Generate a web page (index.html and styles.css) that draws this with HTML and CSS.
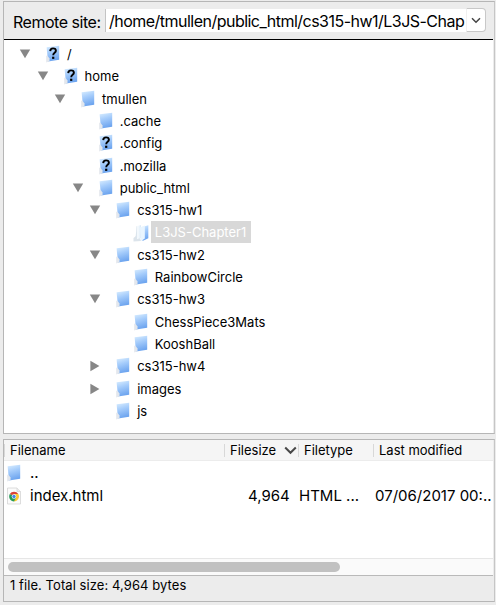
FILE: index.html
```
<!DOCTYPE html>
<html lang="en">
<head>
<meta charset="utf-8">
<title>Remote site</title>
<link rel="stylesheet" href="styles.css">
</head>
<body>
<svg class="defs" width="0" height="0" aria-hidden="true">
  <defs>
    <linearGradient id="blue" x1="0" y1="0" x2=".25" y2="1"><stop offset="0" stop-color="#dcefff"/><stop offset=".45" stop-color="#a5ccfb"/><stop offset="1" stop-color="#6ea5ef"/></linearGradient>
    <linearGradient id="pale" x1="0" y1="0" x2="1" y2="0"><stop offset="0" stop-color="#c3d2de"/><stop offset=".4" stop-color="#f8fcff"/><stop offset="1" stop-color="#dbeaf7"/></linearGradient>
    <symbol id="folder" viewBox="0 0 16 18">
      <path d="M1.6 2.3 14.2 .8v14L3 16.6Z" fill="url(#blue)"/>
      <path d="M1.2 10.5 3 11.5l1.5 2v2.8L1.2 17.4Z" fill="#e3e7ed"/>
    </symbol>
    <symbol id="unknown" viewBox="0 0 16 18">
      <use href="#folder"/>
      <path d="M5.2 6.1C5.3 4.2 6.3 3.4 8 3.4c1.8 0 2.9.9 2.9 2.4 0 2-2.7 2.1-2.7 4.4" fill="none" stroke="#000" stroke-width="1.9"/>
      <rect x="7.1" y="11.7" width="2.2" height="2.2" fill="#000"/>
    </symbol>
    <symbol id="open" viewBox="0 0 16 18">
      <path d="M9 3 15.3 1.2v13L9.5 17Z" fill="url(#blue)"/>
      <path d="M3.5 2.3 8 1v13L2.5 16.5Z" fill="url(#pale)"/>
      <path d="M7 3.4 11.8 1.6v13L8 17Z" fill="#e9f5ff"/>
      <path d="M.5 14 3 12v3.5L7 14.3 8 17 .5 17.5Z" fill="#dce4eb"/>
    </symbol>
    <symbol id="down" viewBox="0 0 12 12"><path d="M.8 1.6H11.2L6 10.2Z" fill="#878787"/></symbol>
    <symbol id="right" viewBox="0 0 12 12"><path d="M1.4.8V11.2L10.4 6Z" fill="#878787"/></symbol>
  </defs>
</svg>
<main class="window">
  <section class="remote">
    <header class="toolbar">
      <label class="site-label">Remote site:</label>
      <div class="combo">
        <span class="path">/home/tmullen/public_html/cs315-hw1/L3JS-Chap</span>
        <button class="drop" aria-label="Show paths"><svg width="10" height="7" viewBox="0 0 10 7"><path d="M1 1.2 5 5.2 9 1.2" fill="none" stroke="#444" stroke-width="1.5"/></svg></button>
      </div>
    </header>
    <ul class="tree">
      <li class="row l0"><svg class="arrow"><use href="#down"/></svg><svg class="icon"><use href="#unknown"/></svg><span>/</span></li>
      <li class="row l1"><svg class="arrow"><use href="#down"/></svg><svg class="icon"><use href="#unknown"/></svg><span>home</span></li>
      <li class="row l2"><svg class="arrow"><use href="#down"/></svg><svg class="icon"><use href="#folder"/></svg><span>tmullen</span></li>
      <li class="row l3"><svg class="arrow"></svg><svg class="icon"><use href="#folder"/></svg><span>.cache</span></li>
      <li class="row l3"><svg class="arrow"></svg><svg class="icon"><use href="#unknown"/></svg><span>.config</span></li>
      <li class="row l3"><svg class="arrow"></svg><svg class="icon"><use href="#unknown"/></svg><span>.mozilla</span></li>
      <li class="row l3"><svg class="arrow"><use href="#down"/></svg><svg class="icon"><use href="#folder"/></svg><span>public_html</span></li>
      <li class="row l4"><svg class="arrow"><use href="#down"/></svg><svg class="icon"><use href="#folder"/></svg><span>cs315-hw1</span></li>
      <li class="row l5"><svg class="arrow"></svg><svg class="icon"><use href="#open"/></svg><span class="selected">L3JS-Chapter1</span></li>
      <li class="row l4"><svg class="arrow"><use href="#down"/></svg><svg class="icon"><use href="#folder"/></svg><span>cs315-hw2</span></li>
      <li class="row l5"><svg class="arrow"></svg><svg class="icon"><use href="#folder"/></svg><span>RainbowCircle</span></li>
      <li class="row l4"><svg class="arrow"><use href="#down"/></svg><svg class="icon"><use href="#folder"/></svg><span>cs315-hw3</span></li>
      <li class="row l5"><svg class="arrow"></svg><svg class="icon"><use href="#folder"/></svg><span>ChessPiece3Mats</span></li>
      <li class="row l5"><svg class="arrow"></svg><svg class="icon"><use href="#folder"/></svg><span>KooshBall</span></li>
      <li class="row l4"><svg class="arrow"><use href="#right"/></svg><svg class="icon"><use href="#folder"/></svg><span>cs315-hw4</span></li>
      <li class="row l4"><svg class="arrow"><use href="#right"/></svg><svg class="icon"><use href="#folder"/></svg><span>images</span></li>
      <li class="row l4"><svg class="arrow"></svg><svg class="icon"><use href="#folder"/></svg><span>js</span></li>
    </ul>
  </section>
  <section class="files">
    <div class="grid head">
      <div>Filename</div>
      <div>Filesize<svg class="sort" width="13" height="9" viewBox="0 0 13 9"><path d="M1.2 1.5 6.5 6.8 11.8 1.5" fill="none" stroke="#484848" stroke-width="2"/></svg></div>
      <div>Filetype</div>
      <div>Last modified</div>
    </div>
    <div class="list">
      <div class="grid entry">
        <div class="name"><svg class="icon"><use href="#folder"/></svg><span>..</span></div>
      </div>
      <div class="grid entry">
        <div class="name"><svg class="icon" viewBox="0 0 16 18"><path d="M1.5 1H11l3.5 3.5V17h-13Z" fill="#fbfbfb" stroke="#d4d4d4" stroke-width=".8"/><path d="M11 1v3.5h3.5" fill="#eee" stroke="#d4d4d4" stroke-width=".7"/><path d="M8 9.5 3.8 7.1A4.9 4.9 0 0 1 12.3 7.1Z" fill="#db4437"/><path d="M8 9.5V7.1h4.3A4.9 4.9 0 0 1 8 14.4Z" fill="#f9c931"/><path d="M8 9.5 3.8 7.1A4.9 4.9 0 0 0 8 14.4L10 10.5Z" fill="#279b58"/><circle cx="8" cy="9.5" r="2.3" fill="#fff"/><circle cx="8" cy="9.5" r="1.7" fill="#4285e8"/></svg><span>index.html</span></div>
        <div class="size">4,964</div>
        <div class="type">HTML ...</div>
        <div class="date">07/06/2017 00:..</div>
      </div>
    </div>
    <div class="scroll"><div class="thumb"></div></div>
    <footer class="status">1 file. Total size: 4,964 bytes</footer>
  </section>
</main>
</body>
</html>
```
FILE: styles.css
```
* { box-sizing: border-box; }
body {
  margin: 0;
  background: #ececec;
  color: #000;
  font: 13px/16px Inter, "Liberation Sans", sans-serif;
}
.defs { position: absolute; }
.window {
  width: 496px;
  height: 605px;
  padding: 1px 1px 0 3px;
  display: flex;
  flex-direction: column;
  gap: 5px;
  overflow: hidden;
}
.remote, .files {
  border: 1px solid #b6b6b6;
  border-right-color: #c6c6c6;
  display: flex;
  flex-direction: column;
}
.remote { height: 433px; padding-right: 1px; }
.files { height: 163px; padding: 0 1px 0 0; }
.toolbar {
  height: 38px;
  flex: none;
  border-bottom: 1px solid #000;
  padding: 6px 6px 0 9px;
  display: flex;
  font-size: 16px;
  line-height: 28px;
  white-space: nowrap;
}
.site-label { width: 92px; flex: none; letter-spacing: -.47px; }
.combo { flex: 1; display: flex; height: 24px; min-width: 0; }
.path {
  flex: none;
  width: 362px;
  height: 23px;
  margin-top: 1px;
  padding-left: 3px;
  line-height: 25px;
  background: #fff;
  border-left: 1px solid #c4c4c4;
  letter-spacing: -.52px;
}
.drop {
  width: 20px;
  height: 24px;
  margin-left: -1px;
  flex: none;
  padding: 0;
  border: 1px solid #c8c8c8;
  border-left-color: #f0f0f0;
  border-radius: 0 4px 4px 0;
  background: #fff;
  display: grid;
  place-items: center;
}
.tree {
  flex: 1;
  margin: 0;
  padding: 3px 0 0 15px;
  list-style: none;
  background: #fff;
}
.row { height: 22.3px; display: flex; align-items: center; white-space: nowrap; }
.l1 { padding-left: 17.6px; }
.l2 { padding-left: 35.1px; }
.l3 { padding-left: 52.7px; }
.l4 { padding-left: 70.2px; }
.l5 { padding-left: 87.8px; }
.arrow { width: 12px; height: 12px; flex: none; }
.icon { width: 16px; height: 18px; flex: none; }
.row .icon { margin: 0 2px 0 14px; }
.row span { height: 22px; line-height: 23px; padding: 0 4px; }
.row .selected { background: #d8d8d8; color: #fff; padding-right: 5px; margin-top: -1px; }
.grid { display: grid; grid-template-columns: 220px 74px 75px 1fr; }
.head { height: 21px; background: #f5f5f5; border-bottom: 1px solid #ececec; line-height: 19px; }
.head > div { display: flex; align-items: center; padding-left: 5px; height: 13px; margin-top: 4px; border-left: 1px solid #d8d8d8; white-space: nowrap; }
.sort { margin-left: 8px; }
.list { height: 97px; background: #fff; }
.entry { height: 23px; align-items: center; font-size: 15px; white-space: nowrap; }
.name { display: flex; align-items: center; gap: 8px; padding-left: 2px; }
.size { padding-left: 24px; }
.type { padding-left: 1px; }
.date { padding-left: 2px; }
.scroll { height: 17px; background: #fafafa; border-top: 1px solid #e6e6e6; padding: 3px 0 0 4px; }
.thumb { width: 332px; height: 10px; border-radius: 5px; background: #c1c1c1; }
.status { flex: 1; border-top: 1px solid #b9b9b9; padding: 0 0 0 6px; line-height: 18px; letter-spacing: .07px; }
```
